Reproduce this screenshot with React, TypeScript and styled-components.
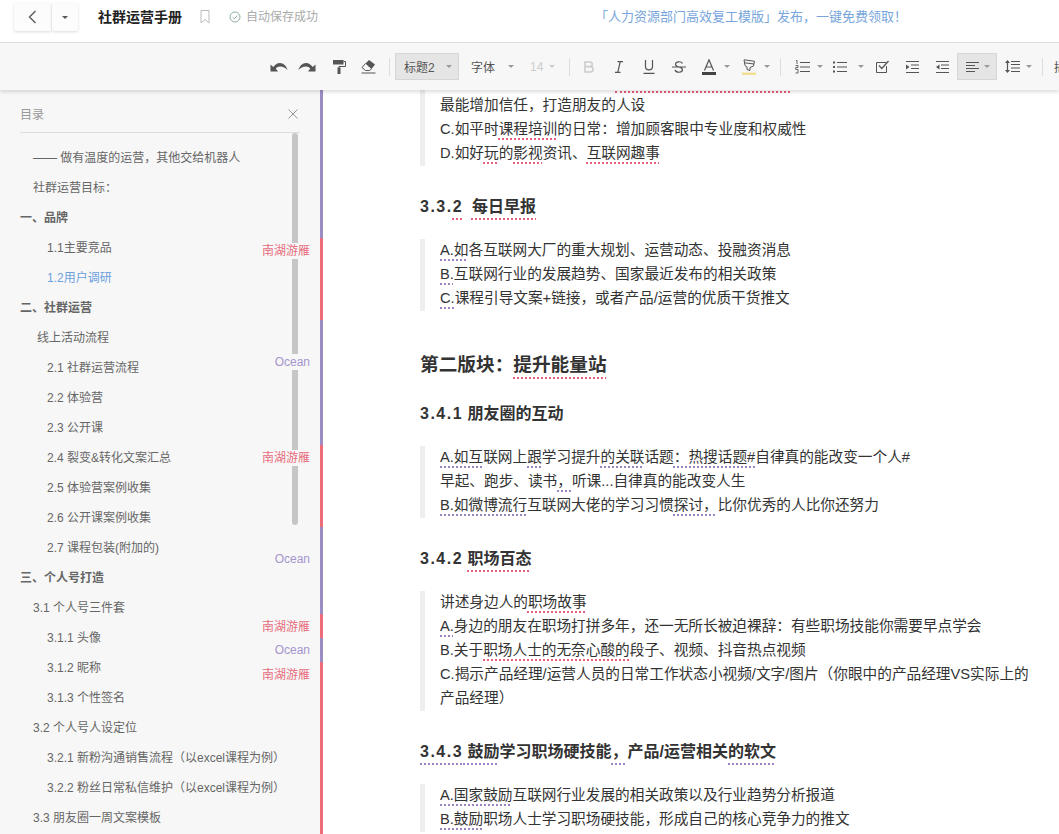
import React from "react";
import styled, { createGlobalStyle } from "styled-components";

const Global = createGlobalStyle`
  html, body { margin: 0; padding: 0; background: #fff; }
  body { font-family: "Liberation Sans", "Noto Sans CJK SC", sans-serif; color: #333; }
  * { box-sizing: border-box; }
`;

const Page = styled.div`
  width: 1059px; height: 834px; overflow: hidden;
  display: flex; flex-direction: column;
`;

/* header */
const Header = styled.header`
  height: 43px; flex: none; background: #fff; border-bottom: 1px solid #ddd;
  display: flex; align-items: flex-start; padding: 3px 0 0 14px; position: relative; z-index: 3;
`;
const NavButton = styled.button<{ $w: number }>`
  width: ${p => p.$w}px; height: 28px; padding: 0; background: #fcfcfc;
  border: 0; border-radius: 2px; box-shadow: 0 1px 3px rgba(0,0,0,.14);
  display: flex; align-items: center; justify-content: center; color: #555;
  & + & { margin-left: 1px; }
`;
const DocTitle = styled.h1`
  margin: 5px 0 0 20px; font-size: 14px; line-height: 18px; font-weight: 700; color: #222; white-space: nowrap;
`;
const MetaIcon = styled.span<{ $ml: number }>`
  margin: 6px 0 0 ${p => p.$ml}px; display: flex; height: 16px; align-items: center;
`;
const SaveText = styled.span`
  margin: 5px 0 0 5px; font-size: 12px; line-height: 18px; color: #aaa; white-space: nowrap;
`;
const Promo = styled.a`
  margin: 5px 0 0 277px; font-size: 13px; line-height: 18px; color: #78a6dc; white-space: nowrap;
`;

/* toolbar */
const Toolbar = styled.div`
  height: 47px; flex: none; background: #f7f7f7; position: relative; z-index: 2;
  box-shadow: 0 2px 4px rgba(0,0,0,.14);
  display: flex; align-items: center; padding: 0 0 0 265px; overflow: hidden;
`;
const Slot = styled.span<{ $w: number; $ml?: number }>`
  flex: none; width: ${p => p.$w}px; margin-left: ${p => p.$ml ?? 0}px; height: 24px;
  display: flex; align-items: center; justify-content: center;
`;
const Sep = styled.span<{ $ml: number }>`
  flex: none; width: 1px; height: 18px; background: #ddd; margin-left: ${p => p.$ml}px;
`;
const Select = styled.span<{ $w: number; $ml?: number; $active?: boolean; $disabled?: boolean; $pl: number }>`
  flex: none; width: ${p => p.$w}px; height: 27px; margin-left: ${p => p.$ml ?? 0}px;
  padding-left: ${p => p.$pl}px; display: flex; align-items: center;
  font-size: 12px; white-space: nowrap; color: ${p => (p.$disabled ? "#ccc" : "#555")};
  background: ${p => (p.$active ? "#e5e5e5" : "transparent")};
  border: 1px solid ${p => (p.$active ? "#d6d6d6" : "transparent")};
`;
const Caret = styled.i<{ $ml?: number; $light?: boolean }>`
  flex: none; width: 0; height: 0; margin-left: ${p => p.$ml ?? 0}px;
  border-left: 3px solid transparent; border-right: 3px solid transparent;
  border-top: 3px solid ${p => (p.$light ? "#ccc" : "#999")};
`;
const OverflowLabel = styled.span`
  flex: none; margin-left: 11px; font-size: 12px; color: #555; white-space: nowrap;
`;

/* main */
const Main = styled.div`
  flex: 1; min-height: 0; display: flex; position: relative;
`;
const Sidebar = styled.aside`
  flex: none; width: 320px; background: #f7f7f7; position: relative; overflow: hidden; padding: 0 20px;
`;
const SideHead = styled.div`
  height: 43px; padding-top: 16px; border-bottom: 1px solid #ddd; color: #999; font-size: 12px; line-height: 18px;
  display: flex; justify-content: space-between; width: 280px;
`;
const CloseMark = styled.span`
  margin: 3px 0 0 0; display: flex; height: 12px; width: 12px;
`;
const TocList = styled.ul`
  list-style: none; margin: 10px 0 0; padding: 0;
`;
const TocItem = styled.li<{ $indent: number; $bold?: boolean; $active?: boolean }>`
  height: 30px; line-height: 30px; font-size: 12px; padding-left: ${p => p.$indent}px; white-space: nowrap;
  font-weight: ${p => (p.$bold ? 700 : 400)};
  color: ${p => (p.$active ? "#6c9fdc" : "#666")};
`;
const Thumb = styled.div`
  position: absolute; left: 292px; top: 43px; width: 6px; height: 392px; border-radius: 3px; background: #c6c6c6;
`;
const Commenter = styled.span<{ $top: number; $red: boolean }>`
  position: absolute; right: 10px; top: ${p => p.$top}px; height: 16px; line-height: 16px; font-size: 12px;
  background: #f7f7f7; padding-left: 2px;
  color: ${p => (p.$red ? "#e86c7c" : "#a596cf")};
`;
const Strip = styled.div`
  flex: none; width: 3px; display: flex; flex-direction: column;
`;
const StripPart = styled.div<{ $h: number; $red: boolean }>`
  flex: ${p => (p.$h ? `0 0 ${p.$h}px` : "1")};
  background: ${p => (p.$red ? "#ef6c79" : "#9c8dc4")};
`;

/* document */
const Doc = styled.main`
  flex: 1; min-width: 0; overflow: hidden; padding: 0 20px 0 97px; color: #333;
`;
const Quote = styled.blockquote`
  margin: 0; border-left: 5px solid #eee; padding: 0 5px 0 15px;
  font-size: 14.67px; line-height: 24px; display: flow-root;
  &::before { content: ""; display: block; margin-top: -1px; }
  &::after { content: ""; display: block; height: 1px; }
`;
const FirstQuote = styled(Quote)`
  padding-top: 2px;
`;
const ClippedMark = styled.div`
  width: 175px; margin-left: 175px; height: 0; border-top: 2px dotted #e8607a;
`;
const Mark = styled.span<{ $c?: "red" | "purple" }>`
  text-decoration: underline dotted ${p => (p.$c === "purple" ? "#9a84c4" : "#e8607a")};
  text-decoration-thickness: 2px; text-underline-offset: 4px; text-decoration-skip-ink: none;
`;
const H3 = styled.h3`
  margin: 29px 0 20px; font-size: 16px; line-height: 24px; font-weight: 700; color: #333;
  ${Mark} { text-underline-offset: 6px; }
`;
const H2 = styled.h2`
  margin: 41px 0 0; font-size: 18.67px; line-height: 26px; font-weight: 700; color: #333;
  ${Mark} { text-underline-offset: 6px; }
  & + ${H3} { margin-top: 24px; }
`;
const Num = styled.span`
  letter-spacing: 1.5px;
`;

const Svg = styled.svg`
  display: block; flex: none;
`;

const D = "#555";
const Ic = {
  Undo: ({ flip }: { flip?: boolean }) => (
    <Svg width="18" height="10" viewBox="0 0 18 10" style={flip ? { transform: "scaleX(-1)" } : undefined}>
      <path fill={D} d="M0.5 9.5V2.5L3.2 5C5 3 7 1 10 1C13.5 1 16.5 4 17.5 8C15.5 5.8 13 4.5 10 4.5C8.2 4.5 6.8 5.3 5.7 6.5L8 9.5Z" />
    </Svg>
  ),
  Roller: () => (
    <Svg width="13" height="14" viewBox="0 0 13 14">
      <path fill={D} d="M0 0H10.5V4.5H0Z" />
      <path fill="none" stroke={D} d="M10.5 1.5H12.5V6.5H6V8" />
      <path fill={D} d="M4.5 7.5H7.5V14H4.5Z" />
    </Svg>
  ),
  Eraser: () => (
    <Svg width="15" height="14" viewBox="0 0 15 14">
      <path fill={D} d="M8 0L14 4.5L10.5 9L7 6L4.5 3.5Z" />
      <path fill="none" stroke={D} d="M4.5 3.5L1 7.5L4.5 10.5H8.5L10.5 9" />
      <path stroke={D} d="M0.5 13H14.5" />
    </Svg>
  ),
  Bold: () => (
    <Svg width="12" height="12" viewBox="0 0 12 12">
      <path fill="none" stroke="#ccc" strokeWidth="1.6" d="M2 1H7C10 1 10 5.6 7 5.6H2ZM2 5.6H7.5C11 5.6 11 11 7.5 11H2Z" />
    </Svg>
  ),
  Italic: () => (
    <Svg width="12" height="12" viewBox="0 0 12 12">
      <path fill="none" stroke={D} strokeWidth="1.2" d="M4.5 .7H10M2 11.3H7.5M7.2 .7L4.8 11.3" />
    </Svg>
  ),
  Underline: () => (
    <Svg width="12" height="14" viewBox="0 0 12 14">
      <path fill="none" stroke={D} strokeWidth="1.2" d="M2.5 0V6.5C2.5 11 9.5 11 9.5 6.5V0M.5 13.4H11.5" />
    </Svg>
  ),
  Strike: () => (
    <Svg width="14" height="12" viewBox="0 0 14 12">
      <path fill="none" stroke={D} strokeWidth="1.2" d="M10.5 2.5C9.5 0 3.5 .2 3.5 3.2C3.5 7 10.5 5 10.5 8.8C10.5 12 4 12 3 9M0 6H14" />
    </Svg>
  ),
  Color: () => (
    <Svg width="14" height="16" viewBox="0 0 14 16">
      <path fill="none" stroke={D} strokeWidth="1.2" d="M2.5 11.5L7 .8L11.5 11.5M4 8H10" />
      <path fill="#444" d="M0 13H14V16H0Z" />
    </Svg>
  ),
  Marker: () => (
    <Svg width="14" height="16" viewBox="0 0 14 16">
      <path fill="none" stroke={D} d="M2 .8L12.5 2.3L11.5 7L8 8.5V11.5L5 10.5V8L3 6.5Z M2.7 3.8L12 5" />
      <path fill="#f2df94" d="M0 13.5H14V16H0Z" />
    </Svg>
  ),
  Ordered: () => (
    <Svg width="15" height="14" viewBox="0 0 15 14">
      <path stroke={D} d="M5 2.5H15M5 7H15M5 11.5H15" />
      <path stroke={D} fill="none" strokeWidth=".9" d="M1 .5H2V4M.5 5.5H3V7.5H.7V9M.5 9.5H3V13H.5" />
    </Svg>
  ),
  Bullets: () => (
    <Svg width="14" height="12" viewBox="0 0 14 12">
      <path stroke={D} d="M4 1.5H14M4 6H14M4 10.5H14" />
      <path fill={D} d="M0 .5H2V2.5H0ZM0 5H2V7H0ZM0 9.5H2V11.5H0Z" />
    </Svg>
  ),
  Check: () => (
    <Svg width="13" height="13" viewBox="0 0 13 13">
      <path fill="none" stroke={D} d="M10.5 6V12.5H.5V2.5H10" />
      <path fill="none" stroke={D} strokeWidth="1.3" d="M3 5.5L5.8 8.5L12.5 1" />
    </Svg>
  ),
  Indent: ({ out }: { out?: boolean }) => (
    <Svg width="13" height="12" viewBox="0 0 13 12">
      <path stroke={D} d="M0 .5H13M5 4H13M5 7.5H13M0 11.5H13" />
      <path fill={D} d={out ? "M3.5 3.5L0 6L3.5 8.5Z" : "M0 3.5L3.5 6L0 8.5Z"} />
    </Svg>
  ),
  Align: () => (
    <Svg width="13" height="10" viewBox="0 0 13 10">
      <path stroke={D} d="M0 .5H13M0 3.5H9M0 6.5H13M0 9.5H9" />
    </Svg>
  ),
  LineHeight: () => (
    <Svg width="15" height="13" viewBox="0 0 15 13">
      <path stroke={D} strokeWidth="1.2" d="M6 1.5H15M6 4.5H15M6 8H15M6 11.5H15M2.5 2V11" />
      <path fill={D} d="M2.5 0L5 3H0ZM2.5 13L0 10H5Z" />
    </Svg>
  ),
};

const toc: [string, number, boolean?, boolean?][] = [
  ["—— 做有温度的运营，其他交给机器人", 13],
  ["社群运营目标：", 13],
  ["一、品牌", 0, true],
  ["1.1主要竞品", 27],
  ["1.2用户调研", 27, false, true],
  ["二、社群运营", 0, true],
  ["线上活动流程", 17],
  ["2.1 社群运营流程", 27],
  ["2.2 体验营", 27],
  ["2.3 公开课", 27],
  ["2.4 裂变&转化文案汇总", 27],
  ["2.5 体验营案例收集", 27],
  ["2.6 公开课案例收集", 27],
  ["2.7 课程包装(附加的)", 27],
  ["三、个人号打造", 0, true],
  ["3.1 个人号三件套", 13],
  ["3.1.1 头像", 27],
  ["3.1.2 昵称", 27],
  ["3.1.3 个性签名", 27],
  ["3.2 个人号人设定位", 13],
  ["3.2.1 新粉沟通销售流程（以excel课程为例）", 27],
  ["3.2.2 粉丝日常私信维护（以excel课程为例）", 27],
  ["3.3 朋友圈一周文案模板", 13],
];

const commenters: [number, boolean][] = [
  [153, true], [264, false], [360, true], [461, false], [529, true], [552, false], [577, true],
];
const stripParts: [number, boolean][] = [
  [148, false], [82, true], [125, false], [82, true], [87, false], [24, true], [24, false], [0, true],
];

export default function App() {
  return (
    <Page>
      <Global />
      <Header>
        <NavButton $w={37}>
          <Svg width="9" height="14" viewBox="0 0 9 14">
            <path fill="none" stroke="#555" strokeWidth="1.3" d="M7.5 1L1.5 7L7.5 13" />
          </Svg>
        </NavButton>
        <NavButton $w={26}>
          <Caret style={{ borderTopColor: "#555" }} />
        </NavButton>
        <DocTitle>社群运营手册</DocTitle>
        <MetaIcon $ml={18}>
          <Svg width="10" height="14" viewBox="0 0 10 14">
            <path fill="none" stroke="#bbb" d="M1 .5H9V13L5 9.5L1 13Z" />
          </Svg>
        </MetaIcon>
        <MetaIcon $ml={19}>
          <Svg width="12" height="12" viewBox="0 0 12 12">
            <circle cx="6" cy="6" r="5" fill="none" stroke="#8fae9f" />
            <path fill="none" stroke="#8fae9f" d="M3.7 6.2L5.4 7.8L8.3 4.5" />
          </Svg>
        </MetaIcon>
        <SaveText>自动保存成功</SaveText>
        <Promo>「人力资源部门高效复工模版」发布，一键免费领取！</Promo>
      </Header>
      <Toolbar>
        <Slot $w={28}><Ic.Undo /></Slot>
        <Slot $w={28}><Ic.Undo flip /></Slot>
        <Slot $w={28} $ml={4}><Ic.Roller /></Slot>
        <Slot $w={28} $ml={1}><Ic.Eraser /></Slot>
        <Sep $ml={7} />
        <Select $w={64} $ml={5} $pl={8} $active>标题2<Caret $ml={11} /></Select>
        <Select $w={60} $ml={3} $pl={8}>字体<Caret $ml={13} /></Select>
        <Select $w={40} $pl={7} $disabled>14<Caret $ml={6} $light /></Select>
        <Sep $ml={7} />
        <Slot $w={30} $ml={4}><Ic.Bold /></Slot>
        <Slot $w={30}><Ic.Italic /></Slot>
        <Slot $w={30}><Ic.Underline /></Slot>
        <Slot $w={30}><Ic.Strike /></Slot>
        <Slot $w={30}><Ic.Color /></Slot>
        <Caret />
        <Slot $w={30} $ml={4}><Ic.Marker /></Slot>
        <Caret />
        <Sep $ml={10} />
        <Slot $w={30} $ml={6}><Ic.Ordered /></Slot>
        <Caret />
        <Slot $w={30} $ml={2}><Ic.Bullets /></Slot>
        <Caret $ml={3} />
        <Slot $w={30} $ml={3}><Ic.Check /></Slot>
        <Slot $w={30}><Ic.Indent /></Slot>
        <Slot $w={30}><Ic.Indent out /></Slot>
        <Select $w={40} $pl={8} $active><Ic.Align /><Caret $ml={5} /></Select>
        <Slot $w={28} $ml={1}><Ic.LineHeight /></Slot>
        <Caret />
        <Sep $ml={10} />
        <OverflowLabel>插入</OverflowLabel>
      </Toolbar>
      <Main>
        <Sidebar>
          <SideHead>
            目录
            <CloseMark>
              <Svg width="10" height="10" viewBox="0 0 10 10">
                <path stroke="#999" d="M.5 .5L9.5 9.5M9.5 .5L.5 9.5" />
              </Svg>
            </CloseMark>
          </SideHead>
          <TocList>
            {toc.map(([text, indent, bold, active]) => (
              <TocItem key={text} $indent={indent} $bold={bold} $active={active}>{text}</TocItem>
            ))}
          </TocList>
          <Thumb />
          {commenters.map(([top, red]) => (
            <Commenter key={top} $top={top} $red={red}>{red ? "南湖游雁" : "Ocean"}</Commenter>
          ))}
        </Sidebar>
        <Strip>
          {stripParts.map(([h, red], i) => <StripPart key={i} $h={h} $red={red} />)}
        </Strip>
        <Doc>
          <FirstQuote>
            <ClippedMark />
            最能增加信任，打造朋友的人设<br />
            C.如平时<Mark>课程培训</Mark>的日常：增加顾客眼中专业度和权威性<br />
            D.如好<Mark>玩</Mark>的<Mark>影视</Mark>资讯、<Mark>互联网趣事</Mark>
          </FirstQuote>
          <H3><Num>3.3.<Mark>2</Mark></Num>&nbsp; <Mark>每日早报</Mark></H3>
          <Quote>
            <Mark $c="purple">A.如</Mark>各互联网大厂的重大规划、运营动态、投融资消息<br />
            <Mark $c="purple">B.</Mark>互联网行业的发展趋势、国家最近发布的相关政策<br />
            <Mark $c="purple">C.</Mark>课程引导文案+链接，或者产品/运营的优质干货推文
          </Quote>
          <H2>第二版块：<Mark>提升能量站</Mark></H2>
          <H3><Num>3.4.1</Num> 朋友圈的互动</H3>
          <Quote>
            <Mark $c="purple">A.如互</Mark>联网上<Mark $c="purple">跟</Mark>学习提升<Mark $c="purple">的关联</Mark>话题<Mark $c="purple">：热搜话题#</Mark>自律真的能改变一个人#<br />
            早起、跑步、读书<Mark $c="purple">，</Mark>听课...自律真的能改变人生<br />
            <Mark $c="purple">B.如微博流行</Mark>互联网大佬的学习习惯<Mark $c="purple">探讨，</Mark>比你优秀的人比你还努力
          </Quote>
          <H3><Num>3.4.2</Num> <Mark>职场百态</Mark></H3>
          <Quote>
            讲述身边人的<Mark>职场故事</Mark><br />
            <Mark $c="purple">A.</Mark>身边的朋友在职场打拼多年，还一无所长被迫裸辞：有些职场技能你需要早点学会<br />
            B.关于<Mark>职场人士的无奈心酸的</Mark>段子、视频、抖音热点视频<br />
            C.揭示产品经理/运营人员的日常工作状态小视频/文字/图片（你眼中的产品经理VS实际上的产品经理）
          </Quote>
          <H3><Mark $c="purple"><Num>3.4.3</Num> 鼓励</Mark>学习职场硬技能<Mark $c="purple">，</Mark>产品/运营相关<Mark $c="purple">的软文</Mark></H3>
          <Quote>
            <Mark $c="purple">A.国家鼓励</Mark>互联网行业发展的相关政策以及行业趋势分析报道<br />
            <Mark $c="purple">B.鼓励</Mark>职场人士学习职场硬技能，形成自己的核心竞争力的推文
          </Quote>
        </Doc>
      </Main>
    </Page>
  );
}
